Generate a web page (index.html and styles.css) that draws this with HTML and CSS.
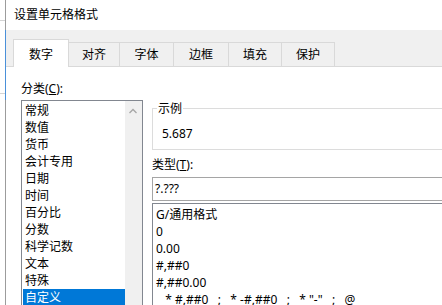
FILE: index.html
```html
<!DOCTYPE html>
<html lang="zh-CN">
<head>
    <meta charset="UTF-8">
    <meta name="viewport" content="width=device-width, initial-scale=1.0">
    <title>设置单元格格式</title>
    <link rel="stylesheet" href="styles.css">
</head>
<body>
    <div class="screen">
        <div class="sheet">
            <div class="sheet-row first"></div>
            <div class="sheet-row"></div>
        </div>
        <div class="edge"><div class="edge-focus"></div></div>
        <div class="dialog">
            <div class="titlebar">设置单元格格式</div>
            <div class="tabs">
                <div class="tab active t1">数字</div>
                <div class="tab t2">对齐</div>
                <div class="tab t3">字体</div>
                <div class="tab t4">边框</div>
                <div class="tab t5">填充</div>
                <div class="tab t6">保护</div>
            </div>
            <div class="page">
                <div class="category">
                    <div class="label">分类(<u>C</u>):</div>
                    <div class="listbox">
                        <ul class="items">
                            <li>常规</li>
                            <li>数值</li>
                            <li>货币</li>
                            <li>会计专用</li>
                            <li>日期</li>
                            <li>时间</li>
                            <li>百分比</li>
                            <li>分数</li>
                            <li>科学记数</li>
                            <li>文本</li>
                            <li>特殊</li>
                            <li class="selected">自定义</li>
                        </ul>
                        <div class="scrollbar">
                            <svg width="17" height="17" viewBox="0 0 17 17"><polyline points="4.5,12 8,8.5 11.5,12" fill="none" stroke="#a6a6a6" stroke-width="1.3"/></svg>
                        </div>
                    </div>
                </div>
                <div class="detail">
                    <fieldset class="sample">
                        <legend>示例</legend>
                        <div>5.687</div>
                    </fieldset>
                    <div class="label type-label">类型(<u>T</u>):</div>
                    <div class="type-input">?.???</div>
                    <ul class="formats">
                        <li>G/通用格式</li>
                        <li>0</li>
                        <li>0.00</li>
                        <li>#,##0</li>
                        <li>#,##0.00</li>
                        <li>   * #,##0   ;   * -#,##0   ;   * "-"   ;   @</li>
                    </ul>
                </div>
            </div>
        </div>
    </div>
</body>
</html>
```

FILE: styles.css
```css
html, body {
    margin: 0;
    height: 305px;
    overflow: hidden;
}
body {
    font-family: "Noto Sans", "Noto Sans CJK SC", sans-serif;
    font-size: 12px;
    line-height: 17px;
    color: #000;
    background: #fff;
}
ul {
    list-style: none;
    margin: 0;
    padding: 0;
}
.screen {
    display: flex;
    height: 305px;
}
.sheet {
    width: 5px;
    background: #fff;
}
.sheet-row {
    height: 72px;
    border-bottom: 1px solid #d4d4d4;
}
.sheet-row.first { height: 20px; }
.edge {
    width: 1px;
    padding-top: 30px;
    background: #9c9c9c;
}
.edge-focus {
    height: 70px;
    background: #4a90d9;
}
.dialog {
    flex: 1;
    min-width: 0;
    display: flex;
    flex-direction: column;
}
.titlebar {
    height: 30px;
    line-height: 30px;
    padding-left: 8px;
    background: #fff;
}
.tabs {
    display: flex;
    align-items: flex-end;
    height: 24px;
    padding: 12px 0 0 7px;
    background: #f0f0f0;
    border-bottom: 1px solid #d9d9d9;
}
.tab {
    box-sizing: border-box;
    height: 24px;
    line-height: 23px;
    text-align: center;
    border: 1px solid #d9d9d9;
    border-bottom: none;
    margin-left: -1px;
    background: #f0f0f0;
}
.tab.active {
    position: relative;
    z-index: 1;
    height: 28px;
    padding-top: 3px;
    margin-bottom: -1px;
    margin-left: 0;
    background: #fff;
}
.t1 { width: 56px; }
.t2 { width: 52px; }
.t3 { width: 55px; }
.t4 { width: 56px; }
.t5 { width: 54px; }
.t6 { width: 54px; }
.page {
    flex: 1;
    display: flex;
    padding: 13px 0 0 15px;
    background: #fff;
    overflow: hidden;
}
.category {
    width: 122px;
    flex-shrink: 0;
}
.listbox {
    display: flex;
    margin-top: 3px;
    height: 220px;
    padding: 1px 0 0 1px;
    border: 1px solid #828790;
}
.items {
    flex: 1;
}
.items li {
    padding-left: 2px;
}
.items li.selected {
    background: #0078d7;
    color: #fff;
}
.scrollbar {
    width: 17px;
    margin-top: -1px;
    background: #f0f0f0;
}
.scrollbar svg {
    display: block;
}
.detail {
    flex: 1;
    min-width: 0;
    margin: 20px -40px 0 9px;
}
.sample {
    margin: 0;
    padding: 8px 0 7px 9px;
    border: 1px solid #dcdcdc;
}
.sample legend {
    padding: 0 1px;
    margin-left: -5px;
}
.type-label {
    margin-top: 6px;
}
.type-input {
    box-sizing: border-box;
    height: 24px;
    margin-top: 4px;
    padding-left: 2px;
    line-height: 22px;
    border: 1px solid #a5a5a5;
}
.formats {
    margin-top: 2px;
    height: 120px;
    padding: 2px 0 0 3px;
    border: 1px solid #828790;
}
.formats li {
    white-space: pre;
}
```
